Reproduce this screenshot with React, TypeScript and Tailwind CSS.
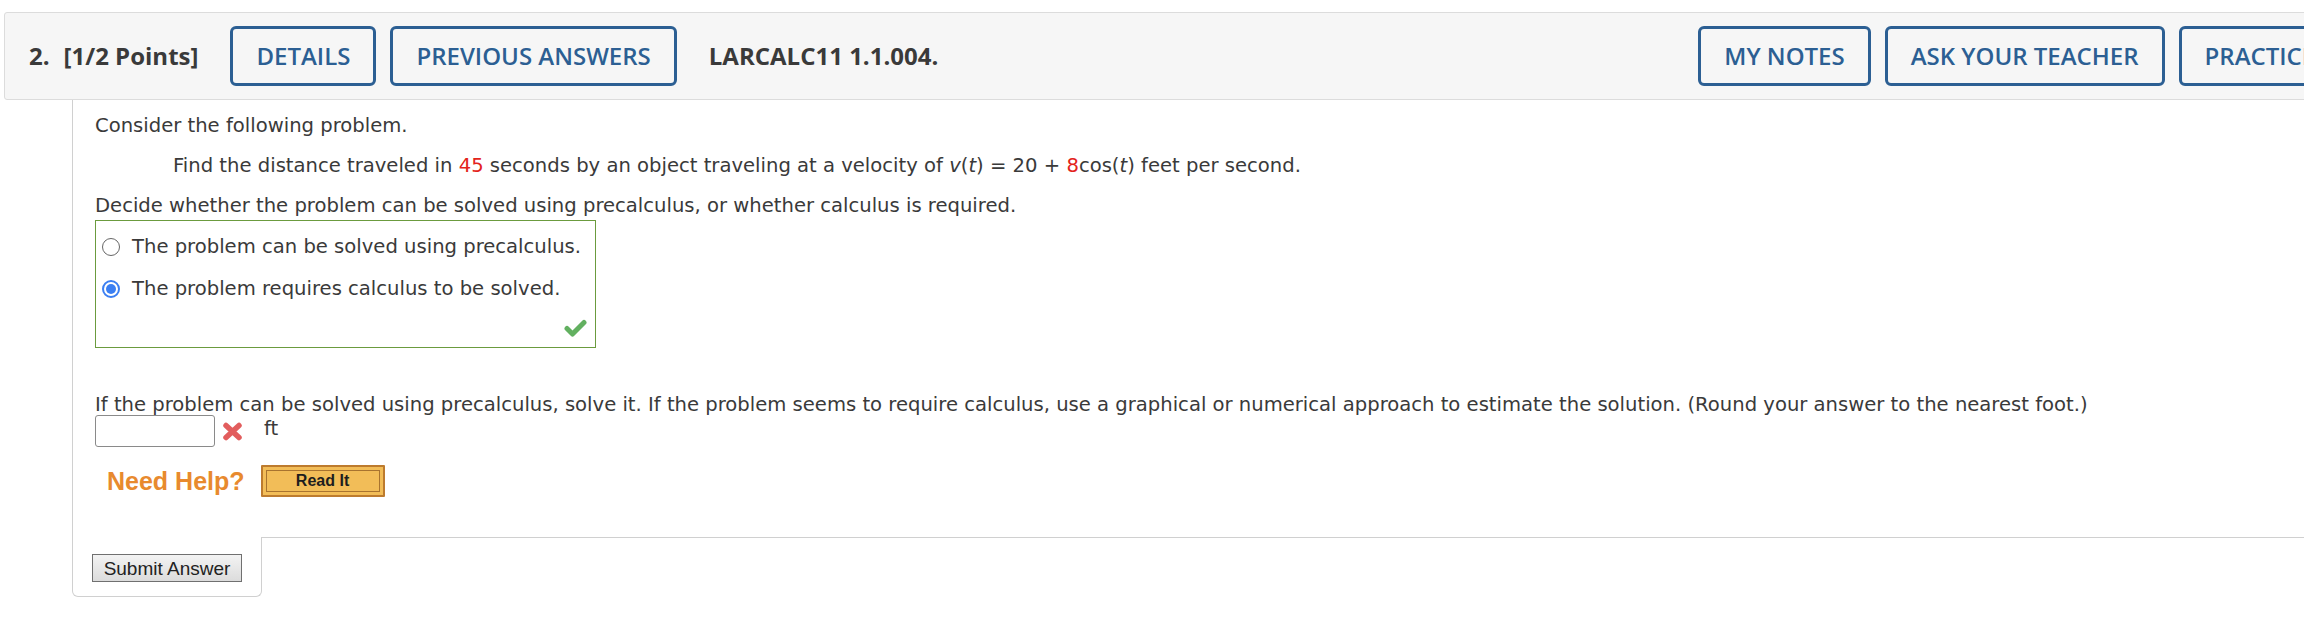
import React from "react";

function HeaderButton({ label }: { label: string }) {
  return (
    <button className="h-[60px] shrink-0 rounded-[6px] border-[3px] border-[#2c5f93] bg-transparent px-[23px] text-[24px] font-semibold text-[#2c5f93]">
      {label}
    </button>
  );
}

function Radio({ checked }: { checked?: boolean }) {
  if (checked) {
    return (
      <span className="flex h-[18px] w-[18px] shrink-0 items-center justify-center rounded-full border-2 border-[#3b7ff2] bg-white">
        <span className="h-[10px] w-[10px] rounded-full bg-[#3b7ff2]" />
      </span>
    );
  }
  return <span className="h-[18px] w-[18px] shrink-0 rounded-full border border-[#666] bg-white" />;
}

function CheckMark() {
  return (
    <svg width="23" height="18" viewBox="0 0 23 18">
      <path
        d="M3 9.5 L8.5 15 L20 3.5"
        fill="none"
        stroke="#62b060"
        strokeWidth="5"
        strokeLinecap="round"
        strokeLinejoin="round"
      />
    </svg>
  );
}

function CrossMark() {
  return (
    <svg width="21" height="19" viewBox="0 0 21 19">
      <path
        d="M4 3.5 L17 15.5 M17 3.5 L4 15.5"
        fill="none"
        stroke="#e25d5d"
        strokeWidth="5.5"
        strokeLinecap="round"
      />
    </svg>
  );
}

export default function App() {
  return (
    <div className="h-[618px] w-[2304px] overflow-hidden bg-white pl-1 pt-3">
      {/* question header */}
      <div className="flex h-[88px] w-[2500px] items-center rounded-[3px] border border-[#dcdcdc] bg-[#f6f6f6] pl-6 font-['Open_Sans',sans-serif] text-[24px] text-[#3a3a3a]">
        <span className="font-bold">2.</span>
        <span className="ml-[14px] font-bold">[1/2 Points]</span>
        <div className="ml-8 flex gap-[14px]">
          <HeaderButton label="DETAILS" />
          <HeaderButton label="PREVIOUS ANSWERS" />
        </div>
        <span className="ml-8 font-bold">LARCALC11 1.1.004.</span>
        <div className="ml-[760px] flex shrink-0 gap-[14px]">
          <HeaderButton label="MY NOTES" />
          <HeaderButton label="ASK YOUR TEACHER" />
          <HeaderButton label="PRACTICE ANOTHER" />
        </div>
      </div>

      {/* question body */}
      <div className="ml-[68px] font-['DejaVu_Sans',sans-serif] text-[19.6px] leading-[28px] text-[#3a3a3a]">
        <div className="border-l border-[#d0d0d0] pb-[40px] pl-[22px] pt-[12px]">
          <p>Consider the following problem.</p>
          <p className="mt-3 pl-[78px]">
            Find the distance traveled in <span className="text-[#e3231b]">45</span> seconds by an object
            traveling at a velocity of <i>v</i>(<i>t</i>) = 20 + <span className="text-[#e3231b]">8</span>cos(
            <i>t</i>) feet per second.
          </p>
          <p className="mt-3">
            Decide whether the problem can be solved using precalculus, or whether calculus is required.
          </p>

          <div className="flex h-[128px] w-[501px] flex-col border border-[#6b9b3e] pb-[10px] pl-[6px] pr-2 pt-[12px]">
            <label className="flex items-center gap-[12px]">
              <Radio />
              <span>The problem can be solved using precalculus.</span>
            </label>
            <label className="mt-[14px] flex items-center gap-[12px]">
              <Radio checked />
              <span>The problem requires calculus to be solved.</span>
            </label>
            <div className="mt-auto flex justify-end">
              <CheckMark />
            </div>
          </div>

          <p className="mt-[43px]">
            If the problem can be solved using precalculus, solve it. If the problem seems to require calculus,
            use a graphical or numerical approach to estimate the solution. (Round your answer to the nearest
            foot.)
          </p>
          <div className="-mt-1 flex items-center">
            <input
              type="text"
              className="h-[32px] w-[120px] rounded-[3px] border border-[#8a8a8a] bg-white"
            />
            <span className="ml-[7px]">
              <CrossMark />
            </span>
            <span className="ml-[21px] -mt-1">ft</span>
          </div>

          <div className="mt-[18px] flex items-center pl-3 font-['Liberation_Sans',Arial,sans-serif]">
            <span className="text-[25px] font-bold leading-[32px] text-[#e88a2e]">Need Help?</span>
            <button className="ml-4 h-[32px] w-[124px] rounded-[1px] border-2 border-[#bd7b2e] bg-[#f2bd58] p-[3px]">
              <span className="flex h-full w-full items-center justify-center border border-[#a8732f] text-[16px] font-bold leading-none text-[#1e1e1e]">
                Read It
              </span>
            </button>
          </div>
        </div>

        <div className="flex">
          <div className="h-[60px] w-[190px] shrink-0 rounded-b-[6px] border-x border-b border-[#d0d0d0] pl-[19px] pt-[17px]">
            <button className="h-[28px] w-[150px] border border-[#707070] bg-gradient-to-b from-[#f3f3f3] to-[#dcdcdc] font-['Liberation_Sans',Arial,sans-serif] text-[19px] leading-none text-[#222]">
              Submit Answer
            </button>
          </div>
          <div className="flex-1 border-t border-[#d0d0d0]" />
        </div>
      </div>
    </div>
  );
}
